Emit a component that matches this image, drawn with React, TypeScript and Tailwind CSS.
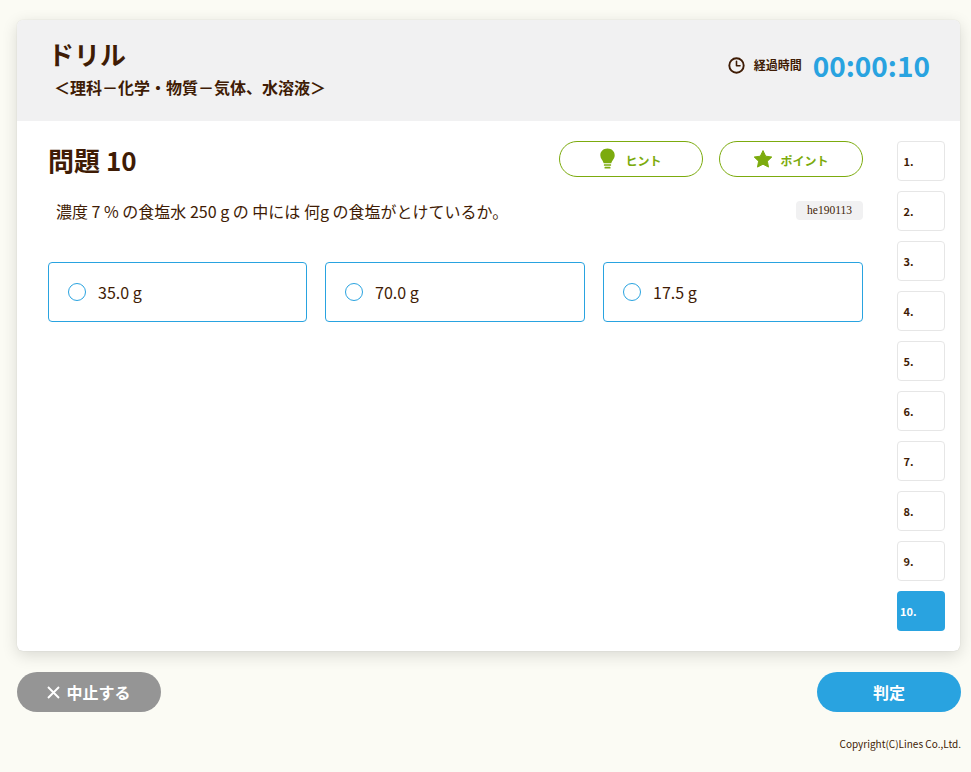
const FONT = "[font-family:'Noto_Sans_CJK_JP','Noto_Sans',sans-serif]";

const choices = ["35.0 g", "70.0 g", "17.5 g"];
const numbers = [1, 2, 3, 4, 5, 6, 7, 8, 9, 10];

const Choice = ({ label }: { label: string }) => (
  <div className="flex h-[60px] items-center rounded-[4px] border border-[#29a3e0] bg-white pl-[19px]">
    <span className="h-[18px] w-[18px] rounded-full border border-[#29a3e0]" />
    <span className="ml-[12px] text-[16px] leading-none text-[#3f1c05]">{label}</span>
  </div>
);

const PillButton = ({ icon, label }: { icon: React.ReactNode; label: string }) => (
  <button className="flex h-[36px] w-[144px] items-center justify-center gap-[7px] rounded-full border border-[#7cab0e] bg-white text-[12px] font-bold text-[#7cab0e]">
    {icon}
    <span className="pt-[3px]">{label}</span>
  </button>
);

const BulbIcon = () => (
  <svg width="15" height="22" viewBox="0.5 0 15 22" fill="#7cab0e" className="mr-[3px]">
    <path d="M8 0.5C3.8 0.5 0.8 3.4 0.8 7.2C0.8 10.6 3.2 11.9 4.2 15.2H11.8C12.8 11.9 15.2 10.6 15.2 7.2C15.2 3.4 12.2 0.5 8 0.5Z" />
    <rect x="4.4" y="16.2" width="7.2" height="1.6" rx="0.4" />
    <rect x="5" y="18.8" width="6" height="1.8" rx="0.6" />
  </svg>
);

const StarIcon = () => (
  <svg width="20" height="20" viewBox="0 0 20 20" fill="#7cab0e" stroke="#7cab0e" strokeWidth="1" strokeLinejoin="round">
    <path d="M10 1.6L12.7 7.2L18.8 8L14.4 12.2L15.5 18.1L10 15.2L4.5 18.1L5.6 12.2L1.2 8L7.3 7.2Z" />
  </svg>
);

const ClockIcon = () => (
  <svg width="17" height="17" viewBox="0 0 17 17" fill="none" stroke="#3f1c05" strokeWidth="1.9">
    <circle cx="8.5" cy="8.5" r="7.2" />
    <path d="M8.5 4.2V8.8H12" strokeLinecap="round" strokeLinejoin="round" strokeWidth="1.6" />
  </svg>
);

const CloseIcon = () => (
  <svg width="13" height="13" viewBox="0 0 13 13" fill="none" stroke="white" strokeWidth="1.9">
    <path d="M1 1L12 12M12 1L1 12" />
  </svg>
);

export default function App() {
  return (
    <div className={`${FONT} flex h-[772px] w-[971px] flex-col bg-[#fbfbf4] pt-[20px] pl-[17px] pr-[10px]`}>
      <div className="flex h-[631px] w-[943px] flex-col overflow-hidden rounded-[6px] bg-white shadow-[0_0_1px_rgba(0,0,0,0.2),0_4px_16px_rgba(0,0,0,0.14)]">
        <header className="flex h-[101px] items-start justify-between bg-[#f1f1f2] pl-[31px] pr-[30px]">
          <div>
            <h1 className="mt-[16px] text-[26px] leading-[36px] font-bold text-[#3f1c05]">ドリル</h1>
            <p className="mt-[3px] pl-[6px] text-[16px] leading-[24px] font-bold text-[#3f1c05]">＜理科－化学・物質－気体、水溶液＞</p>
          </div>
          <div className="mt-[24px] flex items-center">
            <ClockIcon />
            <span className="ml-[9px] text-[12px] font-bold text-[#3f1c05]">経過時間</span>
            <span className="ml-[11px] text-[28px] leading-[42px] font-bold text-[#29a3e0]">00:00:10</span>
          </div>
        </header>
        <div className="flex flex-1 pl-[31px] pr-[15px] pt-[20px]">
          <main className="w-[815px]">
            <div className="flex h-[40px] items-start justify-between">
              <h2 className="-mt-[1px] text-[26px] leading-[40px] font-bold text-[#3f1c05]">問題 10</h2>
              <div className="flex gap-[16px]">
                <PillButton icon={<BulbIcon />} label="ヒント" />
                <PillButton icon={<StarIcon />} label="ポイント" />
              </div>
            </div>
            <div className="mt-[18px] flex items-start justify-between pl-[8px]">
              <p className="text-[16px] leading-[24px] text-[#3f1c05]">濃度 7 % の食塩水 250 g の 中には 何g の食塩がとけているか。</p>
              <span className="mt-[2px] flex h-[19px] w-[67px] items-center justify-center rounded-[4px] bg-[#f1f1f2] font-['Liberation_Serif',serif] text-[11.5px] text-[#3f1c05]">he190113</span>
            </div>
            <div className="mt-[39px] grid grid-cols-[259px_260px_260px] gap-[18px]">
              {choices.map((c) => (
                <Choice key={c} label={c} />
              ))}
            </div>
          </main>
          <nav className="ml-[34px] flex flex-col gap-[10px]">
            {numbers.map((n) =>
              n === 10 ? (
                <div key={n} className="flex h-[40px] w-[48px] items-center rounded-[4px] bg-[#29a3e0] pl-[3px] text-[11px] font-bold text-white">
                  {n}.
                </div>
              ) : (
                <div key={n} className="flex h-[40px] w-[48px] items-center rounded-[4px] border border-[#e6e6e6] bg-white pl-[5.5px] text-[11px] font-bold text-[#3f1c05]">
                  {n}.
                </div>
              ),
            )}
          </nav>
        </div>
      </div>
      <div className="mt-[21px] flex items-center justify-between">
        <button className="flex h-[40px] w-[144px] items-center justify-center gap-[6px] rounded-full bg-[#959595] text-[16px] font-bold text-white">
          <CloseIcon />
          中止する
        </button>
        <button className="h-[40px] w-[144px] rounded-full bg-[#29a3e0] text-[16px] font-bold text-white">判定</button>
      </div>
      <p className="mt-[24px] text-right text-[10px] leading-[15px] text-[#3f1c05]">Copyright(C)Lines Co.,Ltd.</p>
    </div>
  );
}
